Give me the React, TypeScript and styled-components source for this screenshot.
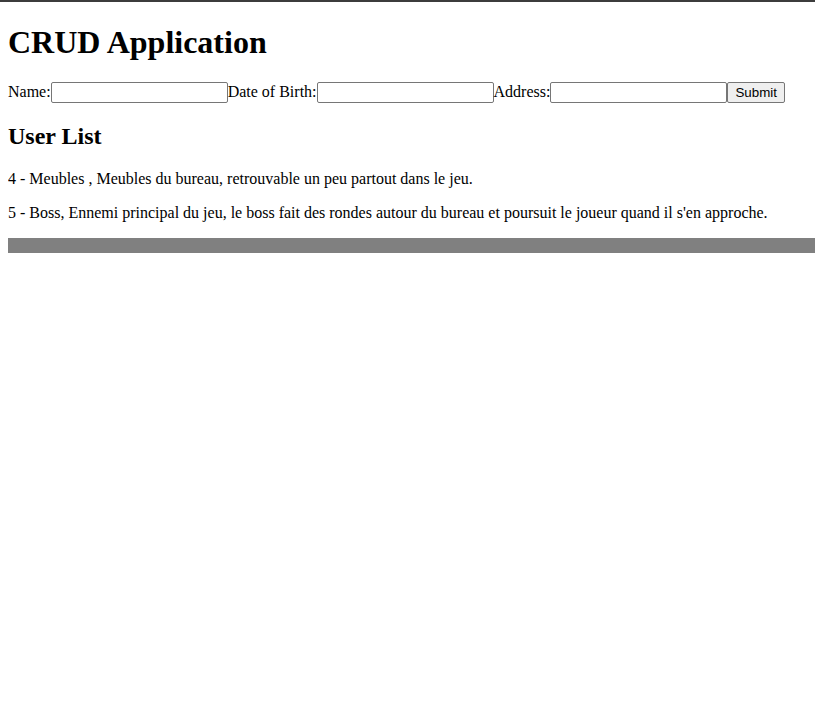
import React from "react";
import styled, { createGlobalStyle } from "styled-components";

const GlobalStyle = createGlobalStyle`
  html {
    border-top: 2px solid #3c3c3c;
    background: #fff;
  }
  body {
    margin: 0 0 8px 8px;
    font-family: "Liberation Serif", "Times New Roman", serif;
    font-size: 16px;
    color: #000;
  }
`;

const Page = styled.div``;

const Title = styled.h1`
  font-size: 32px;
  margin: 22px 0 21.44px;
  font-weight: bold;
`;

const Form = styled.form`
  margin: 0;
  margin-right: 8px;
`;

const Label = styled.label``;

const Field = styled.input`
  box-sizing: border-box;
  width: 177px;
  height: 21px;
  padding: 1px 2px;
  border: 1px solid #767676;
  border-radius: 2px;
  font: 13.33px "Liberation Sans", Arial, sans-serif;
  vertical-align: baseline;
`;

const SubmitBtn = styled.button`
  box-sizing: border-box;
  height: 21px;
  padding: 1px 7px;
  border: 1px solid #767676;
  border-radius: 2px;
  background: #efefef;
  color: #000;
  font: 13.33px "Liberation Sans", Arial, sans-serif;
`;

const SubTitle = styled.h2`
  font-size: 24px;
  margin: 19.92px 0;
  font-weight: bold;
`;

const Entry = styled.p`
  margin: 16px 8px 16px 0;
  font-size: 16px;
`;

const Bar = styled.div`
  height: 15px;
  background: #808080;
`;

const users = [
  { id: 4, name: "Meubles ", info: "Meubles du bureau, retrouvable un peu partout dans le jeu." },
  {
    id: 5,
    name: "Boss",
    info: "Ennemi principal du jeu, le boss fait des rondes autour du bureau et poursuit le joueur quand il s'en approche.",
  },
];

const App = () => {
  return (
    <Page>
      <GlobalStyle />
      <Title>CRUD Application</Title>
      <Form onSubmit={(e) => e.preventDefault()}>
        <Label>Name:</Label>
        <Field type="text" />
        <Label>Date of Birth:</Label>
        <Field type="text" />
        <Label>Address:</Label>
        <Field type="text" />
        <SubmitBtn type="submit">Submit</SubmitBtn>
      </Form>
      <SubTitle>User List</SubTitle>
      {users.map((u) => (
        <Entry key={u.id}>
          {u.id} - {u.name}, {u.info}
        </Entry>
      ))}
      <Bar />
    </Page>
  );
};

export default App;
